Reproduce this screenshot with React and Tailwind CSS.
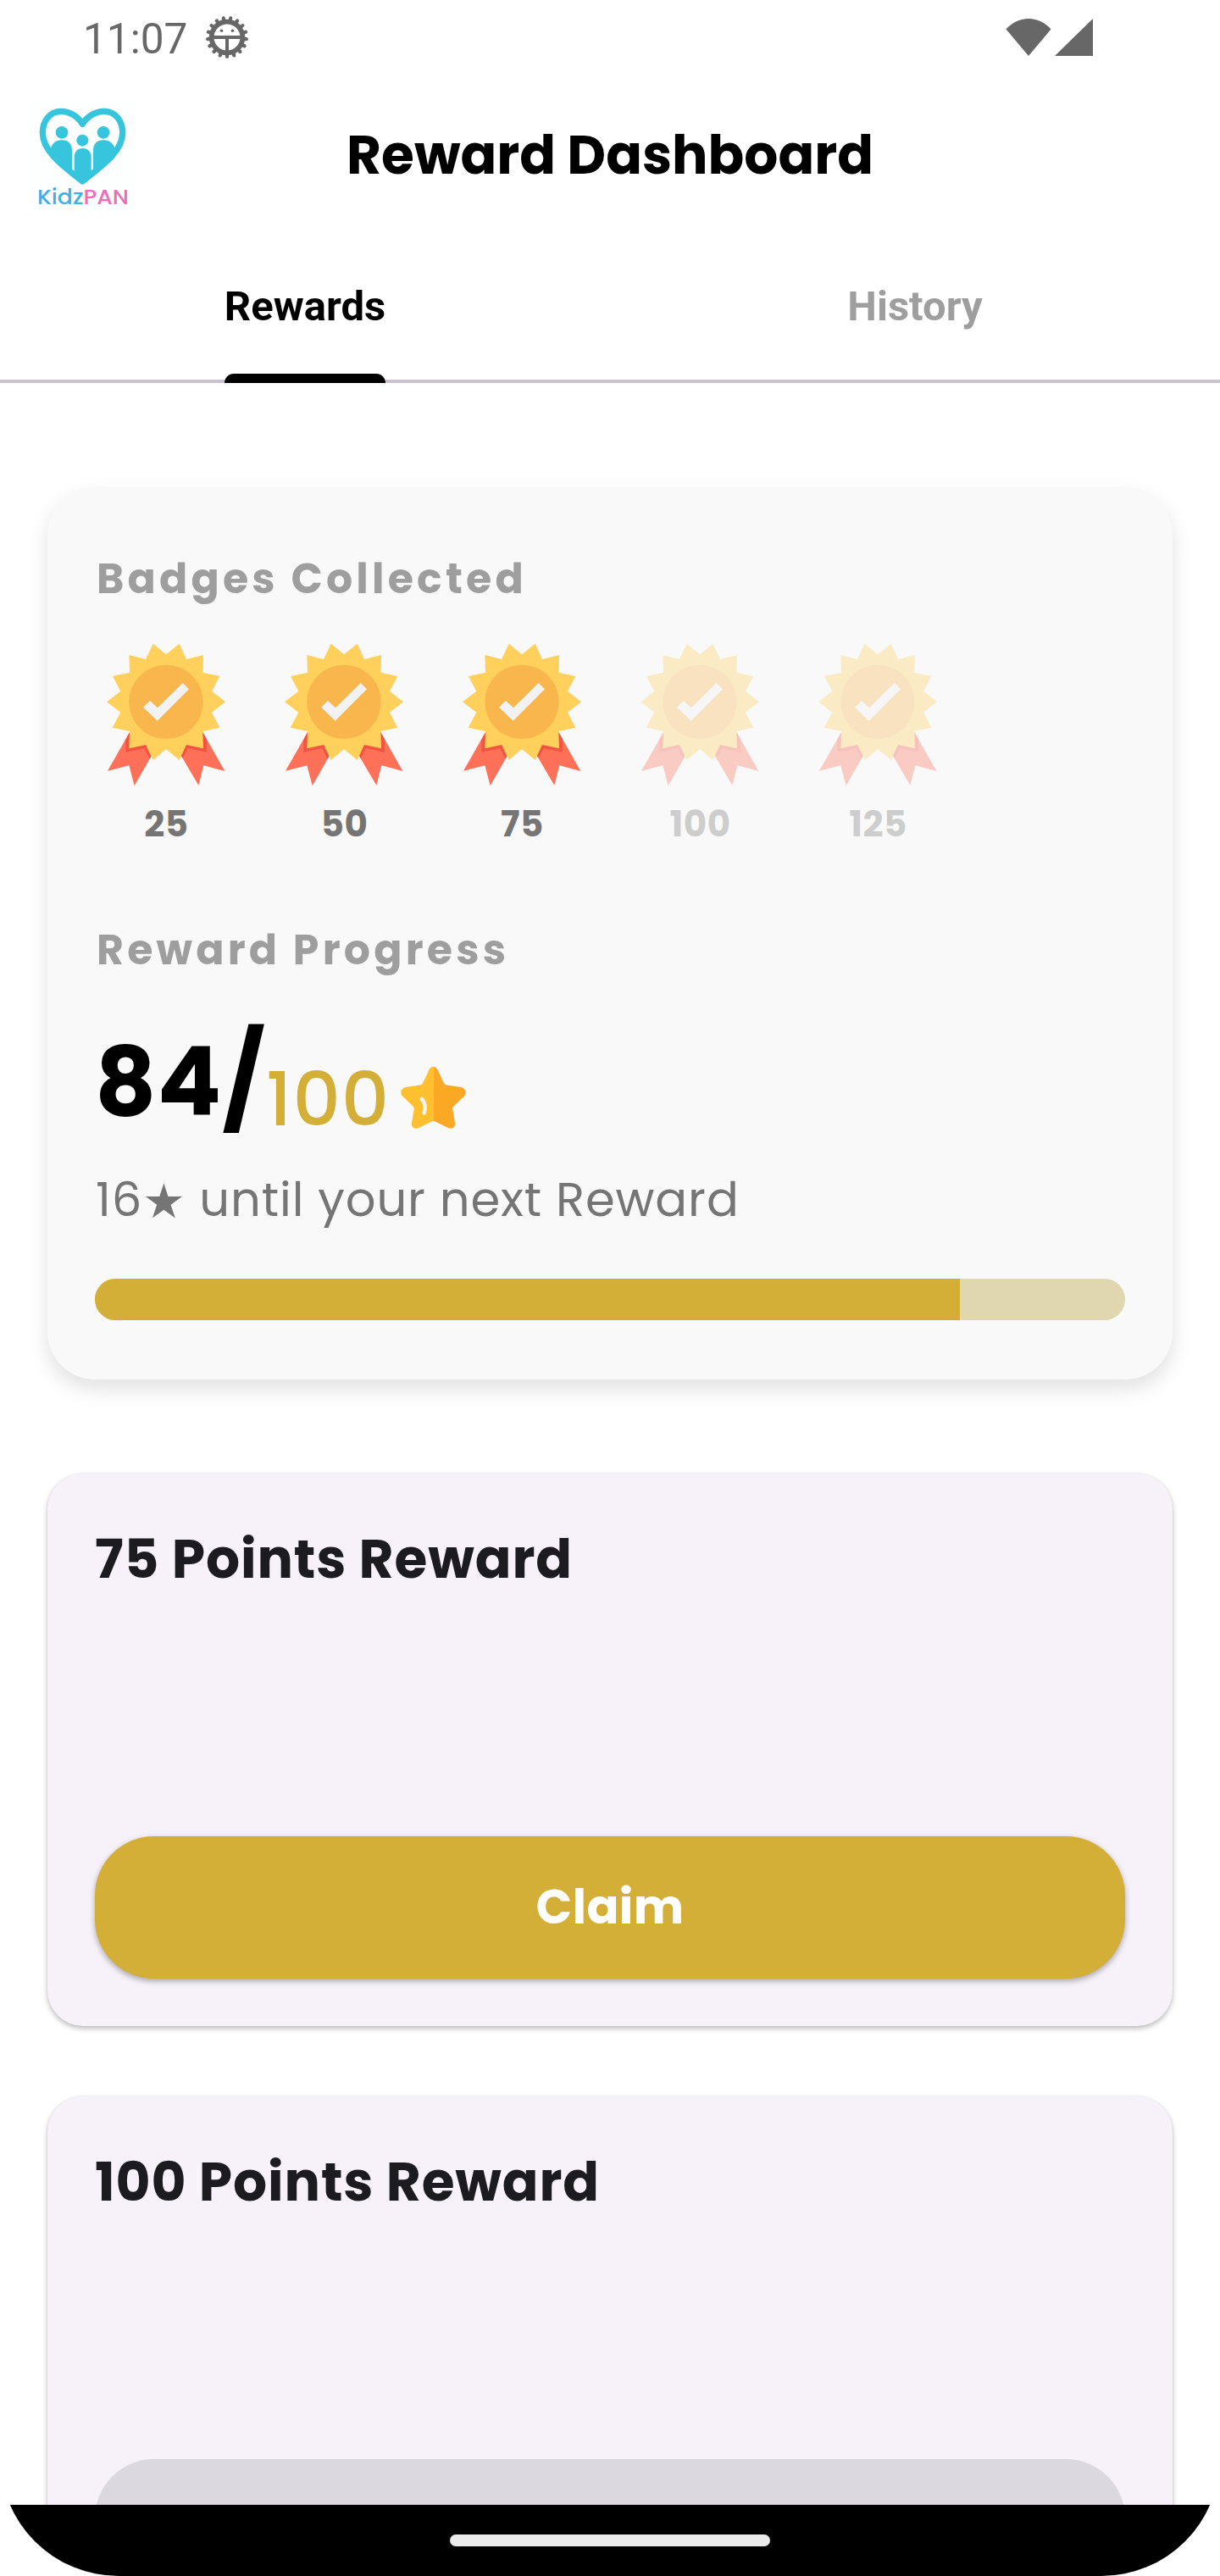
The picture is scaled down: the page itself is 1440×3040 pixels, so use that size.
import React from "react";

const badges = [
  { points: 25, earned: true },
  { points: 50, earned: true },
  { points: 75, earned: true },
  { points: 100, earned: false },
  { points: 125, earned: false },
];

function DebugIcon() {
  const teeth = Array.from({ length: 17 }, (_, i) => Math.PI / 2 + (i * 2 * Math.PI) / 17);
  return (
    <svg className="h-[52px] w-[52px]" viewBox="-26 -26 52 52" fill="none" stroke="#676767">
      <circle r="18.4" strokeWidth="5.8" />
      {teeth.map((a) => (
        <line
          key={a}
          x1={Math.cos(a) * 18}
          y1={Math.sin(a) * 18}
          x2={Math.cos(a) * 23}
          y2={Math.sin(a) * 23}
          strokeWidth="4.2"
          strokeLinecap="round"
        />
      ))}
      <path d="M-17 0H17M0 0V17" strokeWidth="4" />
      <circle cx="-6.5" cy="-7.8" r="1.8" fill="#676767" stroke="none" />
      <circle cx="6.5" cy="-7.8" r="1.8" fill="#676767" stroke="none" />
    </svg>
  );
}

function StatusBar() {
  return (
    <div className="flex h-[88px] shrink-0 items-center justify-between pr-[150px] pl-[98px] text-[#676767]">
      <div className="flex items-center gap-[21px]">
        <span className="pt-[4px] font-['Roboto',sans-serif] text-[49.5px] leading-[60px]">11:07</span>
        <DebugIcon />
      </div>
      <div className="flex items-center gap-[4px]">
        <svg className="h-[44px] w-[54px]" viewBox="0 0 54 44" fill="#676767">
          <path d="M27 44L0.5 12.5C7 5 16.500 0 27 0S47 5 53.500 12.500Z" />
        </svg>
        <svg className="h-[44px] w-[45px]" viewBox="0 0 45 44" fill="#676767">
          <path d="M0 44L45 0V44Z" />
        </svg>
      </div>
    </div>
  );
}

const heart =
  "M202 109C182 76 150 64 127 64C85 64 61 100 61 140C61 205 130 255 202 312C274 255 344 205 344 140C344 100 320 64 278 64C255 64 222 76 202 109Z";

function Logo() {
  return (
    <svg className="h-[150px] w-[140px]" viewBox="0 0 420 450">
      <defs>
        <clipPath id="heart-clip">
          <path d={heart} />
        </clipPath>
      </defs>
      <rect x="20" y="28" width="368" height="376" fill="#fcfffe" />
      <path d={heart} fill="#fcfffe" />
      <g clipPath="url(#heart-clip)" fill="#36c5dc">
        <path d="M40 330V200H88C94 177 108 166 128 166C152 166 165 180 165 202V330Z" />
        <path d="M364 330V200H318C312 177 297 166 277 166C253 166 240 180 240 202V330Z" />
        <path d="M173 330V226C173 206 185 195 203 195C220 195 233 206 233 226V330Z" />
        <path d="M100 277H300V330H100Z" />
      </g>
      <path d={heart} fill="none" stroke="#36c5dc" strokeWidth="22" strokeLinejoin="round" />
      <g fill="#36c5dc">
        <circle cx="129" cy="139" r="22" />
        <circle cx="202" cy="167" r="21" />
        <circle cx="276" cy="139" r="22" />
      </g>
      <text x="42" y="392" className="font-['Poppins','Inter',sans-serif] text-[76px] font-medium" textLength="324" lengthAdjust="spacingAndGlyphs">
        <tspan fill="#45aee8">Kidz</tspan>
        <tspan fill="#f06bbb">PAN</tspan>
      </text>
    </svg>
  );
}

function Header() {
  return (
    <header className="grid h-[192px] shrink-0 grid-cols-[1fr_auto_1fr] items-center pb-[2px]">
      <div className="pt-[4px] pl-[30px]">
        <Logo />
      </div>
      <h1 className="text-[63px] leading-[95px] font-bold text-black">Reward Dashboard</h1>
      <div />
    </header>
  );
}

function Tabs() {
  return (
    <nav className="grid h-[172px] shrink-0 grid-cols-2 border-b-4 border-[#cac4d0] font-['Roboto',sans-serif] text-[49px] leading-[60px] font-bold">
      <div className="-mb-1 flex justify-center">
        <div className="flex h-full flex-col items-center justify-between pt-[52px] text-black">
          <span>Rewards</span>
          <span className="h-[11px] w-full rounded-t-[11px] bg-black" />
        </div>
      </div>
      <div className="flex justify-center pt-[52px] text-[#9e9e9e]">History</div>
    </nav>
  );
}

function BadgeIcon() {
  return (
    <svg className="h-[168px] w-[168px]" viewBox="66 90 504 504">
      <path fill="#ff7058" d="M188 404L111 539L187 520L206 592L264 490L300 420Z" />
      <path fill="#ff7058" d="M448 402L526 540L451 520L433 590L373 488L340 420Z" />
      <path fill="#f1543f" d="M188 404L175 428V473L241 459L259 496L264 490L280 430Z" />
      <path fill="#f1543f" d="M448 402L462 428V473L396 459L378 493L373 488L360 430Z" />
      <path
        fill="#ffd05b"
        d="M272 89L318 127L365 89L390 144L450 129L448 191L508 204L480 257L528 295L480 332L508 386L448 399L450 460L390 447L365 501L318 462L272 501L246 447L187 460L189 399L128 386L157 332L108 295L157 257L129 204L189 191L187 129L246 144Z"
      />
      <circle cx="318" cy="295" r="131" fill="#f8b64c" />
      <path fill="#f2f2f2" d="M377 228L399 250L287 362L237 314L261 291L288 316Z" />
    </svg>
  );
}

function Badge({ points, earned }) {
  return (
    <div className={earned ? "flex w-[168px] flex-col items-center" : "flex w-[168px] flex-col items-center opacity-[0.33]"}>
      <BadgeIcon />
      <span className="mt-[15px] pl-[1px] text-[42px] leading-[59px] font-bold tracking-[0.5px] text-[#757575]">{points}</span>
    </div>
  );
}

function StarIcon() {
  return (
    <svg className="mb-[23px] ml-[13px] h-[73px] w-[77px]" viewBox="0 0 77 73">
      <path
        fill="#ffc02f"
        d="M38.500 0C35.500 0 34 2 33 4.500L26.500 18.500C25.500 20.700 24.500 21.300 22.500 21.500L6 24C1 25 -1.500 30 2 34.500L14 46C15.500 47.500 16 48.500 15.700 50.500L13 66C12.500 71.500 16 74 21 72L38.500 63.500Z"
      />
      <path
        fill="#fba824"
        d="M38.500 0C41.500 0 43 2 44 4.500L50.500 18.500C51.500 20.700 52.500 21.300 54.500 21.500L71 24C76 25 78.500 30 75 34.500L63 46C61.500 47.500 61 48.500 61.300 50.500L64 66C64.500 71.500 61 74 56 72L38.500 63.500Z"
      />
      <path d="M25 38C29 43 29.500 49 27.500 54.500" fill="none" stroke="#f3f3ef" strokeWidth="4.500" strokeLinecap="round" />
    </svg>
  );
}

function ProgressCard() {
  return (
    <section className="h-[1053px] shrink-0 rounded-[56px] bg-[#f9f9f9] px-14 pt-[71px] shadow-[0_11px_24px_rgba(0,0,0,0.12)]">
      <h2 className="pl-[2px] text-[49px] leading-[74px] font-bold tracking-[4.2px] text-[#9e9e9e]">Badges Collected</h2>
      <div className="mt-[40px] flex gap-[42px]">
        {badges.map((b) => (
          <Badge key={b.points} points={b.points} earned={b.earned} />
        ))}
      </div>
      <h2 className="mt-[82px] pl-[2px] text-[49px] leading-[74px] font-bold tracking-[4.2px] text-[#9e9e9e]">Reward Progress</h2>
      <div className="mt-[40px] flex items-end">
        <span className="text-[112px] leading-[157px] font-bold tracking-[0.9px] text-black">84/</span>
        <span className="text-[88px] leading-[115px] font-medium tracking-[0.9px] text-[#d3af37]">100</span>
        <StarIcon />
      </div>
      <p className="mt-[19px] h-[84px] pl-[1px] text-[56px] leading-[84px] tracking-[0.9px] whitespace-nowrap text-[#757575]">
        16<span className="align-[-2px] font-['DejaVu_Sans',sans-serif] text-[56px] leading-none">★</span> until your next Reward
      </p>
      <div className="mt-[51px] h-[49px] overflow-hidden rounded-full bg-[#e0d7b0]">
        <div className="h-full w-[84%] bg-[#d3af37]" />
      </div>
    </section>
  );
}

function RewardCard({ title, claimable }) {
  return (
    <section className="flex h-[652px] shrink-0 flex-col justify-between rounded-[42px] bg-[#f7f2fa] px-14 pt-[54px] pb-14 shadow-[0_3px_6px_rgba(0,0,0,0.26),0_0_3px_rgba(0,0,0,0.06)]">
      <h3 className="text-[63px] leading-[95px] font-bold tracking-[0.9px] text-[#1c1b1f]">{title}</h3>
      {claimable ? (
        <button className="h-[168px] rounded-[70px] bg-[#d3af37] text-[56px] leading-[84px] font-bold tracking-[0.35px] text-white shadow-[0_3px_7px_rgba(0,0,0,0.32)]">
          Claim
        </button>
      ) : (
        <button disabled className="h-[168px] rounded-[70px] bg-[#dcd8df]" aria-label="Locked" />
      )}
    </section>
  );
}

export default function App() {
  return (
    <div className="h-[3040px] w-[1440px] bg-white">
      <div className="flex h-full flex-col overflow-hidden rounded-b-[140px] bg-white font-['Poppins','Inter',sans-serif]">
        <StatusBar />
        <Header />
        <Tabs />
        <main className="flex min-h-0 flex-1 flex-col overflow-hidden px-14 pt-[123px]">
          <ProgressCard />
          <div className="mt-[111px] flex flex-col gap-[83px]">
            <RewardCard title="75 Points Reward" claimable />
            <RewardCard title="100 Points Reward" />
          </div>
        </main>
        <footer className="flex h-[84px] shrink-0 justify-center bg-black pt-[35px]">
          <div className="h-[14px] w-[378px] rounded-full bg-[#ebebeb]" />
        </footer>
      </div>
    </div>
  );
}
